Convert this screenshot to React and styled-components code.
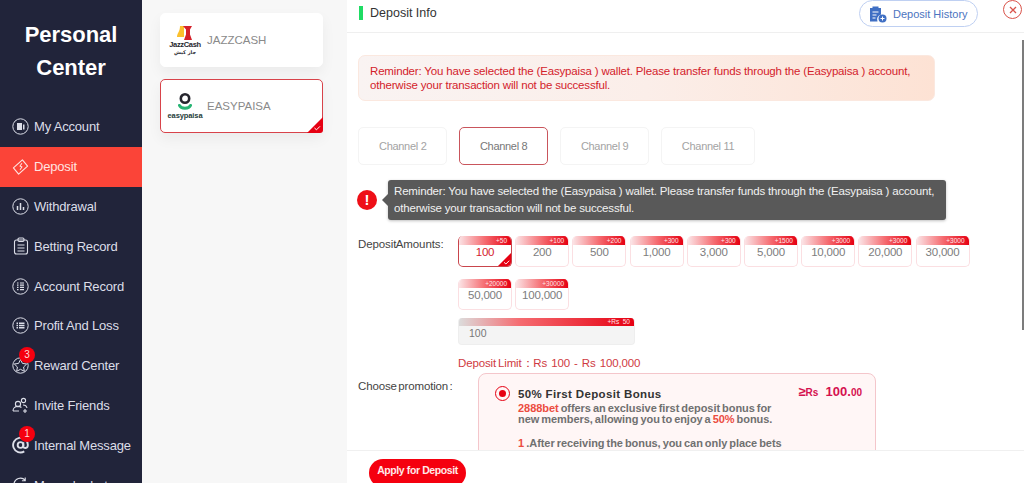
import React from "react"
import styled, { createGlobalStyle } from "styled-components"

const GlobalStyle = createGlobalStyle`
  html, body { margin: 0; padding: 0; height: 100%; overflow: hidden; }
  body { font-family: "Liberation Sans", Arial, sans-serif; background: #fff; }
  * { box-sizing: border-box; }
`

const Ring = ({ children }) => (
  <svg width="17" height="17" viewBox="0 0 17 17" fill="none" stroke="currentColor">
    <circle cx="8.5" cy="8.5" r="7.7" strokeWidth="1" />
    {children}
  </svg>
)

const icons = {
  account: (
    <Ring>
      <rect x="5" y="5" width="5" height="7" fill="currentColor" stroke="none" />
      <path d="M11 6.5h1.5v5H11z" fill="currentColor" stroke="none" />
    </Ring>
  ),
  deposit: (
    <svg width="18" height="18" viewBox="0 0 18 18" fill="none" stroke="currentColor" strokeWidth="1.2">
      <path d="M1.5 10 11 1.5l5.5 6.5L7 16.5z" strokeLinejoin="round" />
      <path d="m10.5 5-2 3 2 1-2 3" strokeWidth="1.1" />
    </svg>
  ),
  withdraw: (
    <Ring>
      <path d="M5.5 8v4M8.5 5v7M11.5 9v3" strokeWidth="1.5" />
    </Ring>
  ),
  betting: (
    <svg width="16" height="18" viewBox="0 0 16 18" fill="none" stroke="currentColor" strokeWidth="1.1">
      <rect x="1.5" y="3" width="13" height="14" rx="2" />
      <rect x="5" y="1" width="6" height="3.5" rx="1.2" />
      <path d="M4.5 8h7M4.5 11h7M4.5 14h7" />
    </svg>
  ),
  record: (
    <Ring>
      <path d="M5 5h1.5M5 7.2h1.5M5 9.4h1.5M5 11.6h1.5M8 5h4M8 7.2h4M8 9.4h4M8 11.6h4" strokeWidth="1.2" />
    </Ring>
  ),
  profit: (
    <Ring>
      <path d="M4.5 6.2h1.5M4.5 8.5h1.5M4.5 10.8h1.5M7 6.2h5.5M7 8.5h5.5M7 10.8h5.5" strokeWidth="1.5" />
    </Ring>
  ),
  reward: (
    <Ring>
      <path d="m8.5 2.500 1.900 3.900 4.300.6-3.100 3 .7 4.300-3.800-2-3.800 2 .7-4.300-3.100-3 4.300-.6z" strokeWidth="1" strokeLinejoin="round" />
    </Ring>
  ),
  invite: (
    <svg width="17" height="17" viewBox="0 0 17 17" fill="none" stroke="currentColor" strokeWidth="1.1">
      <circle cx="6" cy="7" r="2.6" />
      <circle cx="11.5" cy="3.5" r="2.1" />
      <path d="M1 14c0-3 2-4.6 5-4.6 1.4 0 2.6.4 3.4 1.1M1 14h6M11 8c2 0 3.6 1 4 3M13 12v4M11 14h4" />
    </svg>
  ),
  message: (
    <svg width="18" height="18" viewBox="0 0 18 18" fill="none" stroke="currentColor" strokeWidth="2">
      <circle cx="9" cy="9" r="3" />
      <path d="M12 6v4.500c0 2.500 4.800 2.500 4.800-1.500A7.800 7.800 0 1 0 13 15.800" />
    </svg>
  ),
  rebate: (
    <svg width="18" height="18" viewBox="0 0 18 18" fill="none" stroke="currentColor" strokeWidth="1.2">
      <path d="M2 8a7 7 0 0 1 12-4M16 10a7 7 0 0 1-12 4M14 1v3.500h-3.500" />
    </svg>
  ),
}

const navItems = [
  { label: "My Account", icon: "account" },
  { label: "Deposit", icon: "deposit", active: true },
  { label: "Withdrawal", icon: "withdraw" },
  { label: "Betting Record", icon: "betting" },
  { label: "Account Record", icon: "record" },
  { label: "Profit And Loss", icon: "profit" },
  { label: "Reward Center", icon: "reward", badge: 3 },
  { label: "Invite Friends", icon: "invite" },
  { label: "Internal Message", icon: "message", badge: 1 },
  { label: "Manual rebate", icon: "rebate" },
]

const amounts = [
  ["100", "+50"],
  ["200", "+100"],
  ["500", "+200"],
  ["1,000", "+300"],
  ["3,000", "+300"],
  ["5,000", "+1500"],
  ["10,000", "+3000"],
  ["20,000", "+3000"],
  ["30,000", "+3000"],
  ["50,000", "+20000"],
  ["100,000", "+30000"],
]

const channels = ["Channel 2", "Channel 8", "Channel 9", "Channel 11"]

const reminder =
  "Reminder: You have selected the (Easypaisa ) wallet. Please transfer funds through the (Easypaisa ) account, otherwise your transaction will not be successful."

const CornerCheck = ({ size }) => (
  <Corner $size={size}>
    <svg width={size} height={size} viewBox="0 0 16 16">
      <path d="M16 0v13a3 3 0 0 1-3 3H0z" fill="#e60012" />
      <path d="m7.500 11 2 1.800 3.500-3.500" fill="none" stroke="#fff" strokeWidth="1" />
    </svg>
  </Corner>
)

const JazzLogo = () => (
  <LogoBox>
    <svg width="16" height="15" viewBox="0 0 16 15">
      <path d="M3 0h4v11H0c0-4 3-5 3-11z" fill="#fbc02d" />
      <path d="M6 0h9l-2 3.500v5l2 5.500H7l2-5.500v-5z" fill="#d5202a" />
    </svg>
    <JazzWord>JazzCash</JazzWord>
    <JazzUrdu>جاز کیش</JazzUrdu>
  </LogoBox>
)

const EasyLogo = () => (
  <LogoBox>
    <svg width="14" height="18" viewBox="0 0 14 18" fill="none">
      <circle cx="7" cy="5.500" r="4.200" stroke="#26262e" strokeWidth="2.600" />
      <path d="M1.500 12.500c1.500 3.600 9.500 3.600 11 0" stroke="#27b574" strokeWidth="3" strokeLinecap="round" />
    </svg>
    <EasyWord>easypaisa</EasyWord>
  </LogoBox>
)

const App = () => {
  return (
    <Page>
      <GlobalStyle />
      <Sidebar>
        <SideTitle>Personal Center</SideTitle>
        <NavList>
          {navItems.map((item) => (
            <NavItem key={item.label} $active={item.active}>
              <NavIcon>
                {icons[item.icon]}
                {item.badge && <Badge>{item.badge}</Badge>}
              </NavIcon>
              {item.label}
            </NavItem>
          ))}
        </NavList>
      </Sidebar>

      <WalletColumn>
        <WalletCard>
          <JazzLogo />
          JAZZCASH
        </WalletCard>
        <WalletCard $active>
          <EasyLogo />
          EASYPAISA
          <CornerCheck size={16} />
        </WalletCard>
      </WalletColumn>

      <Main>
        <Header>
          <HeaderTitle>Deposit Info</HeaderTitle>
          <HistoryButton>
            <svg width="18" height="18" viewBox="0 0 18 18">
              <path d="M1 3h2.500V1.500h6V3H12v6.500a5 5 0 0 0-3.500 7H1z" fill="#3f6fc4" />
              <path d="M3.500 7h6M3.500 10h4M3.500 13h3" stroke="#fff" strokeWidth="1" />
              <circle cx="13.500" cy="13.500" r="4" fill="#3f6fc4" />
              <path d="M11.500 13.500h4M13.500 11.500v4" stroke="#fff" strokeWidth="1" />
            </svg>
            Deposit History
          </HistoryButton>
          <CloseButton>
            <svg width="8" height="8" viewBox="0 0 8 8">
              <path d="m1 1 6 6M7 1 1 7" stroke="#d9534a" strokeWidth="1.300" />
            </svg>
          </CloseButton>
        </Header>

        <Body>
          <ReminderBox>{reminder}</ReminderBox>

          <Channels>
            {channels.map((c) => (
              <Channel key={c} $active={c === "Channel 8"}>
                {c}
              </Channel>
            ))}
          </Channels>

          <TipRow>
            <AlertDot>!</AlertDot>
            <Tooltip>{reminder}</Tooltip>
          </TipRow>

          <FormRow>
            <RowLabel>Deposit Amounts :</RowLabel>
            <RowContent>
              <Chips>
                {amounts.map(([value, bonus], i) => (
                  <Chip key={value} $active={i === 0}>
                    <ChipBonus>{bonus}</ChipBonus>
                    <ChipValue $active={i === 0}>{value}</ChipValue>
                    {i === 0 && <CornerCheck size={15} />}
                  </Chip>
                ))}
              </Chips>
              <AmountInput>
                <InputBonus>+Rs  50</InputBonus>
                <InputValue>100</InputValue>
              </AmountInput>
              <LimitText>Deposit Limit：Rs  100  -  Rs  100,000</LimitText>
            </RowContent>
          </FormRow>

          <PromoRow>
            <PromoLabel>Choose promotion :</PromoLabel>
            <PromoCard>
              <Radio />
              <PromoContent>
                <PromoHead>
                  <PromoTitle>50% First Deposit Bonus</PromoTitle>
                  <PromoMin>
                    ≥<small>Rs</small>&nbsp; 100.<small>00</small>
                  </PromoMin>
                </PromoHead>
                <PromoText>
                  <Hot>2888bet</Hot> offers an exclusive first deposit bonus for
                  <br />
                  new members, allowing you to enjoy a <Hot>50%</Hot> bonus.
                </PromoText>
                <PromoStep>
                  <Hot>1</Hot>&thinsp;.After receiving the bonus, you can only place bets
                </PromoStep>
              </PromoContent>
            </PromoCard>
          </PromoRow>
          <ScrollThumb />
        </Body>

        <Footer>
          <ApplyButton>Apply for Deposit</ApplyButton>
        </Footer>
      </Main>
    </Page>
  )
}

export default App

const Page = styled.div`
  display: flex;
  width: 1024px;
  height: 483px;
  overflow: hidden;
`
const Sidebar = styled.aside`
  width: 142px;
  flex: none;
  background: #21243a;
  overflow: hidden;
`
const SideTitle = styled.h1`
  margin: 0;
  padding: 18px 20px 0;
  height: 107px;
  color: #fff;
  font-size: 22px;
  line-height: 33px;
  font-weight: 700;
  text-align: center;
  letter-spacing: -0.05px;
`
const NavList = styled.nav`
  display: flex;
  flex-direction: column;
`
const NavItem = styled.div`
  display: flex;
  align-items: center;
  flex: none;
  height: 39.800px;
  padding-left: 12px;
  gap: 5px;
  font-size: 13px;
  letter-spacing: -0.18px;
  white-space: nowrap;
  color: ${(p) => (p.$active ? "#ffe3e0" : "#dcdee8")};
  background: ${(p) => (p.$active ? "#fb4438" : "transparent")};
`
const NavIcon = styled.span`
  position: relative;
  display: flex;
  align-items: center;
  justify-content: center;
  width: 17px;
  height: 18px;
`
const Badge = styled.span`
  position: absolute;
  top: -10px;
  left: 7px;
  width: 16px;
  height: 16px;
  border-radius: 50%;
  background: #f5000f;
  color: #ffd9d9;
  font-size: 10px;
  line-height: 16px;
  text-align: center;
`
const WalletColumn = styled.div`
  width: 205px;
  flex: none;
  display: flex;
  flex-direction: column;
  gap: 12px;
  padding: 13px 24px 0 18px;
  background: #f7f7f7;
`
const WalletCard = styled.div`
  position: relative;
  display: flex;
  align-items: center;
  gap: 6px;
  height: 54px;
  padding-left: 8px;
  background: #fff;
  border-radius: 5px;
  border: 1px solid ${(p) => (p.$active ? "#d8434a" : "#fff")};
  box-shadow: 0 6px 14px rgba(0, 0, 0, 0.05);
  color: #8a8a8a;
  font-size: 11.500px;
`
const Corner = styled.span`
  position: absolute;
  right: -1px;
  bottom: -1px;
  display: block;
  width: ${(p) => p.$size}px;
  height: ${(p) => p.$size}px;
  line-height: 0;
`
const LogoBox = styled.span`
  display: flex;
  flex-direction: column;
  align-items: center;
  justify-content: center;
  width: 32px;
  color: #26262e;
`
const JazzWord = styled.span`
  font-size: 7.500px;
  line-height: 8px;
  font-weight: 700;
  letter-spacing: -0.35px;
`
const JazzUrdu = styled.span`
  font-family: "DejaVu Sans", sans-serif;
  font-size: 5px;
  line-height: 6px;
  font-weight: 700;
`
const EasyWord = styled.span`
  margin-top: 1px;
  font-size: 7.500px;
  line-height: 8px;
  font-weight: 700;
  letter-spacing: -0.1px;
  color: #1f3d3a;
`
const Main = styled.main`
  flex: 1;
  min-width: 0;
  display: flex;
  flex-direction: column;
  background: #fff;
`
const Header = styled.header`
  display: flex;
  flex: none;
  align-items: flex-start;
  height: 33px;
  padding: 0 2px 0 12px;
  border-bottom: 1px solid #efefef;
`
const HeaderTitle = styled.h2`
  flex: 1;
  margin: 6px 0 0;
  padding-left: 7px;
  border-left: 4px solid #1fdc64;
  height: 14px;
  font-size: 12.500px;
  line-height: 14px;
  font-weight: 400;
  color: #333;
`
const HistoryButton = styled.div`
  display: flex;
  align-items: center;
  gap: 6px;
  width: 119px;
  height: 27px;
  margin-right: 25px;
  padding-left: 9px;
  border: 1px solid #bfd0f2;
  border-radius: 14px;
  color: #4c74c0;
  font-size: 11px;
  white-space: nowrap;
`
const CloseButton = styled.div`
  display: flex;
  align-items: center;
  justify-content: center;
  width: 19px;
  height: 19px;
  border: 1.500px solid #d9534a;
  border-radius: 50%;
`
const Body = styled.div`
  position: relative;
  flex: 1;
  min-height: 0;
  overflow: hidden;
  padding: 22px 0 0 11px;
`
const ScrollThumb = styled.div`
  position: absolute;
  right: 0;
  top: 7px;
  width: 2px;
  height: 290px;
  background: #7c7c7c;
`
const ReminderBox = styled.div`
  width: 577px;
  height: 46px;
  padding: 8px 11px;
  border: 1px solid #fbe8df;
  border-radius: 7px;
  background: linear-gradient(90deg, #f9f3f2 0%, #fbeee9 50%, #fde2d4 100%);
  color: #d3222b;
  font-size: 11.500px;
  letter-spacing: -0.17px;
  line-height: 14px;
`
const Channels = styled.div`
  display: flex;
  gap: 11.500px;
  margin-top: 26px;
`
const Channel = styled.div`
  display: flex;
  align-items: center;
  justify-content: center;
  height: 38px;
  padding: 0 20px;
  border-radius: 5px;
  border: 1px solid ${(p) => (p.$active ? "#c9555c" : "#f4f4f4")};
  color: ${(p) => (p.$active ? "#777" : "#a3a3a3")};
  font-size: 11px;
  letter-spacing: -0.3px;
  white-space: nowrap;
`
const TipRow = styled.div`
  display: flex;
  align-items: center;
  gap: 11px;
  margin: 15px 0 0 -1px;
`
const AlertDot = styled.span`
  width: 20px;
  height: 20px;
  flex: none;
  border-radius: 50%;
  background: #ee0f17;
  color: #fff;
  font-size: 15px;
  line-height: 20px;
  font-weight: 700;
  text-align: center;
`
const Tooltip = styled.div`
  position: relative;
  width: 558px;
  height: 40px;
  padding: 3px 6px;
  border-radius: 3px;
  background: #595959;
  box-shadow: 0 1px 3px rgba(0, 0, 0, 0.25);
  color: #f1f1f1;
  font-size: 11.500px;
  letter-spacing: -0.17px;
  line-height: 17px;

  &::before {
    content: "";
    position: absolute;
    left: -6px;
    top: 14px;
    border: 6px solid transparent;
    border-left: 0;
    border-right-color: #595959;
  }
`
const FormRow = styled.div`
  display: flex;
  margin-top: 16px;
`
const RowLabel = styled.div`
  width: 100px;
  flex: none;
  padding-top: 1px;
  color: #444;
  font-size: 11.500px;
  letter-spacing: -0.1px;
  line-height: 14px;
  word-spacing: -3px;
  white-space: nowrap;
`
const RowContent = styled.div`
  flex: 1;
  min-width: 0;
`
const Chips = styled.div`
  display: flex;
  flex-wrap: wrap;
  gap: 12px 3.200px;
  width: 520px;
`
const Chip = styled.div`
  position: relative;
  width: 54px;
  height: 31px;
  border: 1px solid ${(p) => (p.$active ? "#c9454c" : "#fbdfe2")};
  border-top: 0;
  border-radius: 5px;
  overflow: hidden;
  background: #fff;
`
const bonusStrip = `
  background: linear-gradient(90deg, #fbe3e5 0%, #f56b70 50%, #e60012 100%);
  color: #ffe6e6;
  font-size: 6.500px;
  text-align: right;
  white-space: pre;
`
const ChipBonus = styled.div`
  ${bonusStrip}
  height: 9px;
  line-height: 9px;
  padding-right: 4px;
`
const ChipValue = styled.div`
  color: ${(p) => (p.$active ? "#d3222b" : "#7d7d7d")};
  font-size: 11.500px;
  letter-spacing: -0.2px;
  line-height: 14px;
  text-align: center;
`
const AmountInput = styled.div`
  width: 177px;
  height: 27px;
  margin-top: 8px;
  border-radius: 4px;
  overflow: hidden;
  background: #f4f4f4;
  border: 1px solid #eeeeee;
  border-top: 0;
`
const InputBonus = styled.div`
  ${bonusStrip}
  background: linear-gradient(90deg, #dcdcdc 0%, #f56b70 35%, #e60012 100%);
  height: 8px;
  line-height: 8px;
  padding-right: 4px;
`
const InputValue = styled.div`
  padding-left: 10px;
  color: #777;
  font-size: 10.500px;
  line-height: 14px;
`
const LimitText = styled.div`
  margin-top: 11px;
  color: #cf3a42;
  font-size: 11.500px;
  letter-spacing: -0.15px;
  line-height: 14px;
  white-space: pre;
  word-spacing: -1px;
`
const PromoRow = styled.div`
  display: flex;
  margin-top: 3px;
`
const PromoLabel = styled(RowLabel)`
  width: 120px;
  padding-top: 6px;
  word-spacing: -1.500px;
  letter-spacing: -0.15px;
`
const PromoCard = styled.div`
  display: flex;
  flex: none;
  gap: 8px;
  width: 398px;
  height: 120px;
  padding: 12px 13px 0 16px;
  border: 1px solid #f4c6cb;
  border-radius: 8px;
  background: #fff6f6;
`
const Radio = styled.span`
  position: relative;
  flex: none;
  width: 15px;
  height: 15px;
  border: 1.500px solid #e60012;
  border-radius: 50%;

  &::after {
    content: "";
    position: absolute;
    inset: 3px;
    border-radius: 50%;
    background: #e60012;
  }
`
const PromoContent = styled.div`
  flex: 1;
  min-width: 0;
`
const PromoHead = styled.div`
  display: flex;
  justify-content: space-between;
  align-items: flex-start;
`
const PromoTitle = styled.div`
  margin-top: 1px;
  color: #333;
  font-size: 11.500px;
  line-height: 14px;
  font-weight: 700;
  letter-spacing: 0.35px;
`
const PromoMin = styled.div`
  margin-top: -1px;
  color: #d5114f;
  font-size: 13px;
  line-height: 14px;
  font-weight: 700;

  small {
    font-size: 10px;
  }
`
const PromoText = styled.div`
  margin-top: 2px;
  color: #707070;
  font-size: 11px;
  letter-spacing: -0.05px;
  line-height: 11px;
  font-weight: 700;
  word-spacing: -1px;
`
const PromoStep = styled(PromoText)`
  margin-top: 13px;
`
const Hot = styled.span`
  color: #ec4c3f;
`
const Footer = styled.footer`
  flex: none;
  height: 33px;
  padding: 8px 0 0 22px;
  border-top: 1px solid #f0f0f0;
  background: #fff;
`
const ApplyButton = styled.button`
  display: block;
  width: 97px;
  height: 28px;
  padding: 0 0 6px;
  border: 0;
  border-radius: 14px;
  background: #f5000f;
  color: #ffe9e9;
  font-family: inherit;
  font-size: 10.500px;
  letter-spacing: -0.4px;
  font-weight: 700;
`
